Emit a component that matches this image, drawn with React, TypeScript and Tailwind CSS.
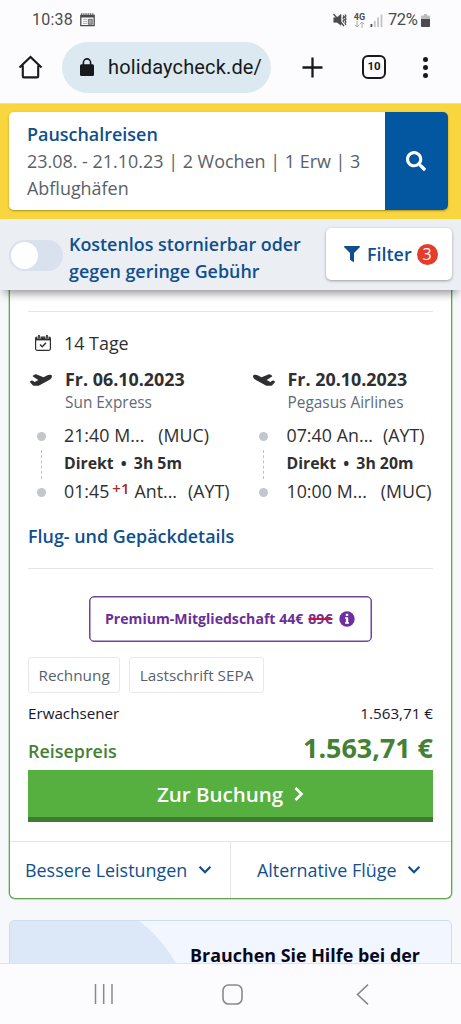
import type { ReactNode } from "react";
import { FaFilter, FaSearch } from "react-icons/fa";

interface Stop {
  time: string;
  city: string;
  code: string;
  nextDay?: boolean;
  gap: string;
}

interface FlightProps {
  date: string;
  airline: string;
  duration: string;
  from: Stop;
  to: Stop;
  inbound?: boolean;
}

function StatusBar() {
  return (
    <div className="flex h-10 items-center pl-8 pr-[31px] font-[Roboto] text-[16px] text-[#4b4b4d]">
      <span className="w-[42px] tracking-[0.2px]">10:38</span>
      <svg className="ml-[6px] h-[14px] w-[15px]" viewBox="0 0 15 14" fill="none" stroke="currentColor">
        <path d="M.8 2.5h13.4v10.2H.8z" strokeWidth="1.3" />
        <path d="M1 1h13" strokeWidth="1.6" strokeDasharray="1 .8" />
        <path d="M1 3.6h13" strokeWidth="1.8" />
        <path d="M3 6.5h4M3 8.5h4M3 10.5h4" stroke="#a5a5a7" strokeWidth=".8" />
        <path d="M8.3 6.3h4v5h-4z" fill="#a5a5a7" strokeWidth=".7" />
      </svg>
      <div className="ml-auto flex items-center">
        <svg className="h-[14px] w-[15px]" viewBox="0 0 15 14" fill="none" stroke="currentColor">
          <path d="M.8 4.7h3L8 1.3v11L4 9.3H.8z" fill="currentColor" strokeWidth=".6" />
          <path d="M.5 1l10.5 12" strokeWidth="1.3" />
          <path d="M10 2.5l1.2 1.2L10 5l1.2 1.5L10 8l1.2 1.5M12 1.5L13 3l-1 1.5L13 6l-1 1.5L13 9l-1 1.5L13 12" strokeWidth="1.2" />
        </svg>
        <div className="ml-[5px] flex w-[13px] flex-col items-center">
          <span className="text-[9px] font-bold leading-[8px]">4G</span>
          <svg className="h-[7px] w-[11px] text-[#aaaaac]" viewBox="0 0 11 7" fill="none" stroke="currentColor" strokeWidth="1">
            <path d="M3 0v6M.8 3.8L3 6l2.2-2.2M8 7V1M5.8 3.2L8 1l2.2 2.2" />
          </svg>
        </div>
        <svg className="ml-[4px] h-[13px] w-[13px]" viewBox="0 0 13 13">
          <path d="M.5 10h1.8v3H.5z" fill="#4b4b4d" />
          <path d="M3.8 7h1.8v6H3.8zM7.2 3.6H9V13H7.2zM10.6.5h1.8V13h-1.8z" fill="#c3c3c5" />
        </svg>
        <span className="ml-[5px] w-[32px] text-[16.5px] tracking-[-0.4px]">72%</span>
        <svg className="ml-px h-[13px] w-[9px]" viewBox="0 0 9 13">
          <path d="M3 0h3v1.5h2q1 0 1 1V12q0 1-1 1H1q-1 0-1-1V2.5q0-1 1-1h2z" fill="#bcbcbe" />
          <path d="M0 5h9v7q0 1-1 1H1q-1 0-1-1z" fill="#4b4b4d" />
        </svg>
      </div>
    </div>
  );
}

function BrowserBar() {
  return (
    <div className="flex h-16 items-center border-b border-[#dcdde3] pb-[9px] pl-[18px] pr-[33.5px] font-[Roboto] text-[#17191c]">
      <svg className="h-6 w-[25px]" viewBox="0 0 25 24" fill="none" stroke="currentColor" strokeWidth="2.1">
        <path d="M1.5 12.6L12.5 1.9l11 10.7M4.8 10.5v10.7q0 1.2 1.2 1.2h13q1.2 0 1.2-1.2V10.5" />
      </svg>
      <div className="ml-[19px] flex h-[51px] w-[209px] items-center rounded-full bg-[#dde9f1] pl-[18px]">
        <svg className="h-[18px] w-[14px]" viewBox="0 0 14 18">
          <rect y="6.2" width="14" height="11.8" rx="1.5" fill="currentColor" />
          <path d="M3.4 7V4.5a3.6 3.6 0 017.2 0V7" fill="none" stroke="currentColor" strokeWidth="1.6" />
        </svg>
        <span className="ml-[14px] whitespace-nowrap text-[20px] tracking-[0.15px]">holidaycheck.de/</span>
      </div>
      <svg className="ml-[31px] h-[21px] w-[21px]" viewBox="0 0 21 21" stroke="currentColor" strokeWidth="2.3">
        <path d="M10.5.5v20M.5 10.5h20" />
      </svg>
      <div className="ml-[39px] flex h-[24px] w-[24px] items-center justify-center rounded-[6px] border-2 border-current text-[11.5px] font-bold">
        10
      </div>
      <div className="ml-auto flex flex-col gap-[3px]">
        <i className="h-[5px] w-[5px] rounded-full bg-current" />
        <i className="h-[5px] w-[5px] rounded-full bg-current" />
        <i className="h-[5px] w-[5px] rounded-full bg-current" />
      </div>
    </div>
  );
}

function SearchSummary() {
  return (
    <div className="h-[115px] bg-[#f9d63e] px-[9px] pt-2">
      <div className="flex h-[98px] w-[439px] rounded-[5px] shadow-[0_1px_2px_rgba(80,60,0,0.45)]">
        <div className="flex-1 rounded-l-[5px] bg-white pl-[18px] pt-[9px] text-[17.95px] leading-[27px] text-[#58616b]">
          <div className="font-semibold text-[#0f4f8e]">Pauschalreisen</div>
          <div className="whitespace-nowrap">23.08. - 21.10.23 | 2 Wochen | 1 Erw | 3</div>
          <div>Abflughäfen</div>
        </div>
        <button aria-label="Suchen" className="flex w-[63px] items-center justify-center rounded-r-[5px] bg-[#0356a0] pr-px text-white">
          <FaSearch className="h-5 w-5" />
        </button>
      </div>
    </div>
  );
}

function FilterBar() {
  return (
    <div className="relative z-10 flex h-[71px] bg-[#ebeff3] pl-[9px] pr-[9px] shadow-[0_7px_9px_-4px_rgba(0,0,0,0.45)]">
      <div className="mt-[21px] h-[31px] w-[54px] rounded-full bg-[#d9e0ee] p-[2px]">
        <div className="h-[27px] w-[27px] rounded-full bg-white" />
      </div>
      <div className="ml-[6px] mt-3 whitespace-nowrap text-[17.9px] font-semibold leading-[27px] text-[#0f4f8e]">
        <div>Kostenlos stornierbar oder</div>
        <div>gegen geringe Gebühr</div>
      </div>
      <button className="ml-auto mt-[9px] flex h-[52px] w-[126px] items-center rounded-[5px] bg-white pl-[18px] text-[#0f4f8e] shadow-[0_1px_3px_rgba(0,0,0,0.35)]">
        <FaFilter className="h-[16px] w-[16px]" />
        <span className="ml-[7px] text-[17.9px] font-semibold">Filter</span>
        <span className="ml-[5px] flex h-[21px] w-[21px] items-center justify-center rounded-full bg-[#e43d2c] text-[16px] text-white">3</span>
      </button>
    </div>
  );
}

function Plane({ inbound }: { inbound?: boolean }) {
  return (
    <svg className={inbound ? "h-[13px] w-[22px] -scale-x-100" : "h-[13px] w-[22px]"} viewBox="0 0 640 360" preserveAspectRatio="none" fill="currentColor">
      <path d="M80.55 341.27c6.28 6.84 15.1 10.72 24.33 10.71l130.54-.18a65.62 65.62 0 0 0 29.64-7.12l290.96-147.65c26.74-13.57 50.71-32.94 67.02-58.31 18.31-28.48 20.3-49.09 13.07-63.65-7.21-14.57-24.74-25.27-58.25-27.45-29.85-1.94-59.54 5.92-86.28 19.48l-98.51 49.99-218.7-82.06a17.8 17.8 0 0 0-18-1.11L90.62 67.29c-10.67 5.41-13.25 19.65-5.17 28.53l156.22 98.1-103.21 52.38-72.35-36.47a17.8 17.8 0 0 0-16.07.02L9.91 230.22c-10.44 5.3-13.19 19.12-5.57 28.08l76.21 82.97z" />
    </svg>
  );
}

function StopRow({ stop }: { stop: Stop }) {
  return (
    <div className="flex h-7 items-center whitespace-nowrap text-[17.8px]">
      <span>{stop.time}</span>
      {stop.nextDay && <sup className="top-[-3px] ml-[3px] text-[15px] font-semibold text-[#a82a2a]">+1</sup>}
      <span className="ml-[5px]">{stop.city}</span>
      <span className={stop.gap}>({stop.code})</span>
    </div>
  );
}

function Flight({ date, airline, duration, from, to, inbound }: FlightProps) {
  return (
    <div className="flex w-[222.5px] shrink-0">
      <div className="flex w-[26px] shrink-0 flex-col items-center">
        <div className="mt-[7px]">
          <Plane inbound={inbound} />
        </div>
        <i className="mt-[46px] h-[9px] w-[9px] rounded-full bg-[#c3c7cb]" />
        <div className="mt-[9px] h-[29px] border-l border-dashed border-[#bfc3c7]" />
        <i className="mt-[9px] h-[9px] w-[9px] rounded-full bg-[#c3c7cb]" />
      </div>
      <div className="ml-[10px] text-[#2f2f31]">
        <div className="ml-px h-[26px] whitespace-nowrap text-[17.9px] font-bold leading-[27px]">{date}</div>
        <div className="ml-px h-[29px] text-[15.4px] leading-[22px] text-[#5f6a77]">{airline}</div>
        <StopRow stop={from} />
        <div className="h-7 whitespace-nowrap text-[15.8px] font-bold leading-7">
          Direkt <span className="mx-[3px]">•</span> {duration}
        </div>
        <StopRow stop={to} />
      </div>
    </div>
  );
}

function Chevron({ className, right }: { className: string; right?: boolean }) {
  return (
    <svg className={className} viewBox={right ? "0 0 10 14" : "0 0 14 10"} fill="none" stroke="currentColor">
      <path d={right ? "M1.5 1l6 6-6 6" : "M1.6 1.8L7 7.2l5.4-5.4"} strokeWidth={right ? 2.6 : 2.2} />
    </svg>
  );
}

function Tag({ children }: { children: ReactNode }) {
  return (
    <span className="flex h-9 items-center rounded-[3px] border border-[#e6eaee] px-[9.5px] text-[15.3px] text-[#59616c]">
      {children}
    </span>
  );
}

function OfferCard() {
  return (
    <div className="mx-[9px] flex h-[609px] flex-col rounded-b-[6px] border border-t-0 border-[#5fa850] bg-white shadow-[0_0_0_0.5px_#8bc97e]">
      <div className="flex h-[551px] flex-col px-[18px] text-[#2f2f31]">
        <div className="mt-[20.5px] h-px shrink-0 bg-[#e3e5e6]" />
        <div className="mt-[18.5px] flex h-[26px] items-center pl-[7px]">
          <svg className="h-4 w-4" viewBox="0 0 16 16" fill="none" stroke="currentColor">
            <rect x=".6" y="2" width="14.8" height="13.3" rx="1.5" strokeWidth="1.2" />
            <path d="M.7 3.8h14.6" strokeWidth="3.2" />
            <path d="M4 0v3.8M12 0v3.8" stroke="#fff" strokeWidth="3" />
            <path d="M4 0v3.8M12 0v3.8" strokeWidth="1.7" />
            <path d="M5 9.6l2.2 2.1 3.8-4" strokeWidth="1.4" />
          </svg>
          <span className="ml-[13px] text-[17.9px]">14 Tage</span>
        </div>

        <div className="mt-[10px] flex h-[139px]">
          <Flight
            date="Fr. 06.10.2023"
            airline="Sun Express"
            duration="3h 5m"
            from={{ time: "21:40", city: "M...", code: "MUC", gap: "ml-[14px]" }}
            to={{ time: "01:45", city: "Ant...", code: "AYT", gap: "ml-[11px]", nextDay: true }}
          />
          <Flight
            inbound
            date="Fr. 20.10.2023"
            airline="Pegasus Airlines"
            duration="3h 20m"
            from={{ time: "07:40", city: "An...", code: "AYT", gap: "ml-[10px]" }}
            to={{ time: "10:00", city: "M...", code: "MUC", gap: "ml-[14px]" }}
          />
        </div>

        <div className="mt-[18px] text-[17.9px] font-semibold leading-[26px] text-[#0f4f8e]">Flug- und Gepäckdetails</div>
        <div className="mt-[19px] h-px shrink-0 bg-[#e3e5e6]" />

        <div className="mt-[27px] flex h-[46px] w-[283px] shrink-0 items-center self-center whitespace-nowrap rounded-[5px] border border-[#70459a] pl-[15px] text-[14.1px] font-bold text-[#6b2f96] shadow-[inset_0_0_0_0.5px_#70459a]">
          Premium-Mitgliedschaft 44€
          <s className="ml-[5px] decoration-[#cc1238] decoration-2">89€</s>
          <svg className="ml-[6px] h-4 w-4" viewBox="0 0 16 16">
            <circle cx="8" cy="8" r="7.7" fill="#6d2fa0" />
            <path d="M6.8 2.7h2.4v2.2H6.8zM6 6.3h3.2v5H10v1.5H6v-1.5h.9V7.7H6z" fill="#fff" />
          </svg>
        </div>

        <div className="mt-[15px] flex gap-[9px]">
          <Tag>Rechnung</Tag>
          <Tag>Lastschrift SEPA</Tag>
        </div>

        <div className="mt-[8px] flex h-[25px] shrink-0 items-center justify-between text-[15.2px] text-[#16162c]">
          <span>Erwachsener</span>
          <span>1.563,71 €</span>
        </div>
        <div className="flex h-[44px] shrink-0 items-center justify-between text-[#448035]">
          <span className="mt-[6px] text-[17.9px] font-semibold">Reisepreis</span>
          <span className="mt-px text-[26.9px] font-bold">1.563,71 €</span>
        </div>
        <button className="flex h-[52px] shrink-0 items-center justify-center border-b-[5px] border-[#3e7d31] bg-[#55b040] pt-px text-[20.5px] font-semibold text-white">
          Zur Buchung
          <Chevron right className="ml-[11px] h-[14px] w-[10px]" />
        </button>
      </div>

      <div className="flex flex-1 border-t border-[#e3e6e9] text-[17.9px] text-[#0f4f8e]">
        <button className="flex w-[221px] items-center whitespace-nowrap border-r border-[#e3e6e9] pl-[15px]">
          Bessere Leistungen
          <Chevron className="ml-[11px] h-[10px] w-[14px]" />
        </button>
        <button className="flex flex-1 items-center pl-[26px]">
          Alternative Flüge
          <Chevron className="ml-[11px] h-[10px] w-[14px]" />
        </button>
      </div>
    </div>
  );
}

function HelpCard() {
  return (
    <div className="relative mx-[9px] mt-[21px] h-[120px] overflow-hidden rounded-[5px] border border-[#cdddf0] bg-[#f2f6fe]">
      <div className="absolute -left-[87px] -top-[27px] h-[270px] w-[270px] rounded-full bg-[#dce8f7]" />
      <div className="relative ml-[180px] mt-[21px] whitespace-nowrap text-[17.9px] font-bold leading-[26px] text-[#080820]">
        Brauchen Sie Hilfe bei der
      </div>
    </div>
  );
}

function NavBar() {
  return (
    <div className="flex h-[61px] items-center border-t border-[#e0e3e8] bg-[#fcfcfe] pl-[94px] text-[#89898b]">
      <svg className="h-5 w-[19px]" viewBox="0 0 19 20" stroke="currentColor" strokeWidth="1.5">
        <path d="M1.5 0v20M9.7 0v20M18 0v20" />
      </svg>
      <svg className="ml-[109px] h-[21px] w-[21px]" viewBox="0 0 21 21" fill="none" stroke="currentColor" strokeWidth="1.6">
        <rect x="1" y="1" width="19" height="19" rx="5.5" />
      </svg>
      <svg className="ml-[113px] h-[21px] w-[13px]" viewBox="0 0 13 21" fill="none" stroke="currentColor" strokeWidth="1.6">
        <path d="M12 .7L1.5 10.5 12 20.3" />
      </svg>
    </div>
  );
}

export default function App() {
  return (
    <div className="flex h-[1024px] w-[461px] flex-col overflow-hidden bg-[#fcfcff] font-['Open_Sans',sans-serif]">
      <StatusBar />
      <BrowserBar />
      <SearchSummary />
      <FilterBar />
      <main className="h-[673px] overflow-hidden bg-[#f6f8fc]">
        <OfferCard />
        <HelpCard />
      </main>
      <NavBar />
    </div>
  );
}
